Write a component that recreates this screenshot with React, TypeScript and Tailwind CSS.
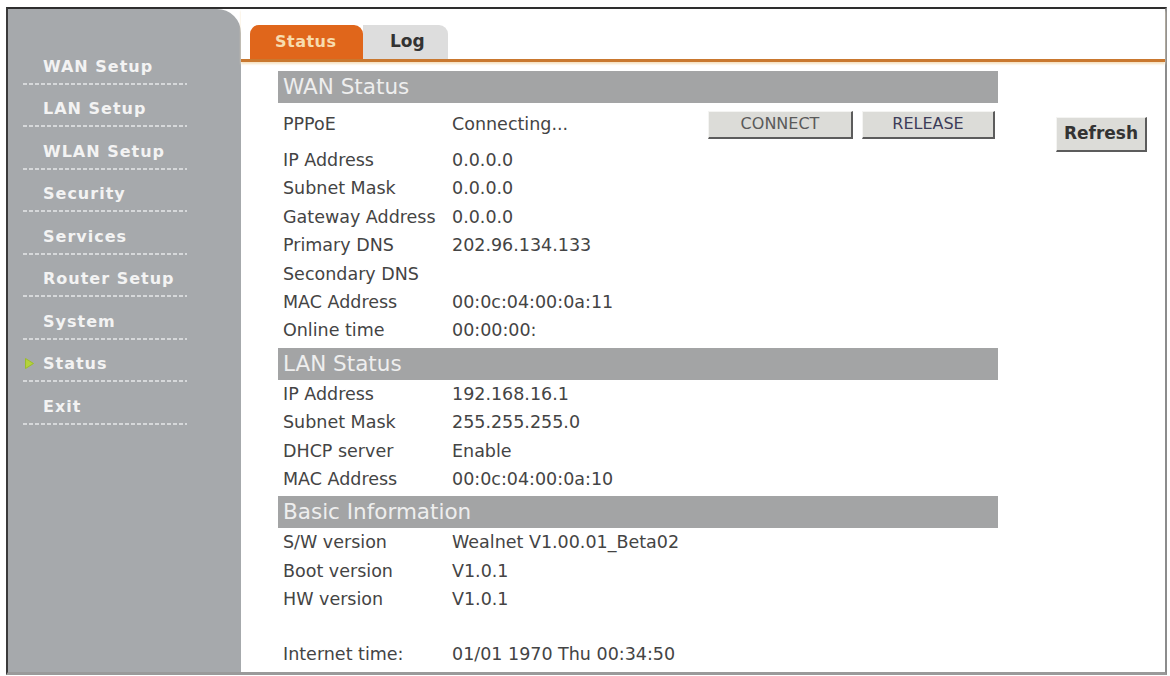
import type { ReactNode } from 'react';

const FONT = "font-['DejaVu_Sans',Verdana,sans-serif]";

const MENU = ['WAN Setup', 'LAN Setup', 'WLAN Setup', 'Security', 'Services', 'Router Setup', 'System', 'Status', 'Exit'];

const WAN_ROWS: [string, string][] = [
  ['IP Address', '0.0.0.0'],
  ['Subnet Mask', '0.0.0.0'],
  ['Gateway Address', '0.0.0.0'],
  ['Primary DNS', '202.96.134.133'],
  ['Secondary DNS', ''],
  ['MAC Address', '00:0c:04:00:0a:11'],
  ['Online time', '00:00:00:'],
];

const LAN_ROWS: [string, string][] = [
  ['IP Address', '192.168.16.1'],
  ['Subnet Mask', '255.255.255.0'],
  ['DHCP server', 'Enable'],
  ['MAC Address', '00:0c:04:00:0a:10'],
];

const BASIC_ROWS: [string, string][] = [
  ['S/W version', 'Wealnet V1.00.01_Beta02'],
  ['Boot version', 'V1.0.1'],
  ['HW version', 'V1.0.1'],
];

function SideMenu({ active }: { active: string }) {
  return (
    <div className="w-[233px] shrink-0 rounded-tr-[24px] bg-[#a6a9ac] pt-[33px]">
      {MENU.map((label) => (
        <div key={label} className="h-[42.5px]">
          <div className="flex h-[40.5px] items-end pb-[7px] pl-[17px]">
            <span className="flex h-[19px] w-[9px] items-center">
              {label === active && (
                <svg width="9" height="11" viewBox="0 0 9 11">
                  <path d="M0.5 0.5 L8.5 5.5 L0.5 10.5 Z" fill="#b4d23c" stroke="#9bbd2a" strokeWidth="1" />
                </svg>
              )}
            </span>
            <span className="ml-[9px] text-[16px] font-bold leading-[19px] tracking-[1px] text-[#f3f3f3]">{label}</span>
          </div>
          <div className="ml-[15px] h-[2px] w-[164px] bg-[linear-gradient(to_right,#d6d8da_0_4px,transparent_4px_6px)] bg-[length:6px_2px] bg-repeat-x" />
        </div>
      ))}
    </div>
  );
}

function SectionHeader({ title }: { title: string }) {
  return (
    <div className="mt-[3px] h-[32px] bg-[#a3a4a5] pl-[5px] text-[21.5px] leading-[32px] text-[#eeeeee] first:mt-0">
      {title}
    </div>
  );
}

function InfoRow({ label, value, tall, children }: { label: string; value: string; tall?: boolean; children?: ReactNode }) {
  return (
    <div className={['flex items-center pl-[5px] text-[17.5px] text-[#444444]', tall ? 'h-[43px]' : 'h-[28.4px]'].join(' ')}>
      <span className="w-[169px] shrink-0 whitespace-nowrap">{label}</span>
      <span className="whitespace-nowrap">{value}</span>
      {children}
    </div>
  );
}

function PushButton({ label, className }: { label: string; className: string }) {
  return (
    <button
      type="button"
      className={[
        'border-t border-l border-t-[#f4f4f2] border-l-[#f4f4f2] border-r-2 border-b-2 border-r-[#5c5c5c] border-b-[#5c5c5c] bg-[#dcdcd8]',
        className,
      ].join(' ')}
    >
      {label}
    </button>
  );
}

export default function App() {
  return (
    <div className={`h-[676px] w-[1170px] overflow-hidden bg-white pl-[6px] pt-[7px] ${FONT}`}>
      <div className="flex h-[668px] w-[1161px] border-t-2 border-l-2 border-r-2 border-b-[3px] border-t-[#2e2e2e] border-l-[#3a3a3a] border-r-[#8c8c8c] border-b-[#9a9a9a]">
        <SideMenu active="Status" />

        <div className="flex flex-1 flex-col">
          {/* tab strip */}
          <div className="flex h-[53px] items-end border-b-[3px] border-[#c9782f] pl-[9px] shadow-[0_2px_2px_#f6e2c2]">
            <div className="flex h-[34px] w-[113px] items-center rounded-t-[9px] bg-[#e0661b] pl-[25px] text-[16px] font-bold tracking-[0.5px] text-[#f7dcae]">
              Status
            </div>
            <div className="flex h-[34px] w-[85px] items-center rounded-tr-[9px] bg-[#dddddd] pl-[27px] text-[17px] font-bold text-[#333333]">
              Log
            </div>
          </div>

          <div className="flex items-start pl-[37px] pt-[9px]">
            <div className="w-[720px] shrink-0">
              <SectionHeader title="WAN Status" />
              <InfoRow label="PPPoE" value="Connecting..." tall>
                <div className="ml-auto flex gap-[9px] pr-[3px]">
                  <PushButton label="CONNECT" className="h-[28px] w-[145px] text-[16px] text-[#5a5a5a]" />
                  <PushButton label="RELEASE" className="h-[28px] w-[133px] text-[16px] text-[#3c3c58]" />
                </div>
              </InfoRow>
              {WAN_ROWS.map(([label, value]) => (
                <InfoRow key={`wan-${label}`} label={label} value={value} />
              ))}

              <SectionHeader title="LAN Status" />
              {LAN_ROWS.map(([label, value]) => (
                <InfoRow key={`lan-${label}`} label={label} value={value} />
              ))}

              <SectionHeader title="Basic Information" />
              {BASIC_ROWS.map(([label, value]) => (
                <InfoRow key={`basic-${label}`} label={label} value={value} />
              ))}
              <div className="h-[26px]" />
              <InfoRow label="Internet time:" value="01/01 1970 Thu 00:34:50" />
            </div>

            <PushButton label="Refresh" className="ml-[58px] mt-[46px] h-[35px] w-[91px] text-[17px] font-bold text-[#333333]" />
          </div>
        </div>
      </div>
    </div>
  );
}
